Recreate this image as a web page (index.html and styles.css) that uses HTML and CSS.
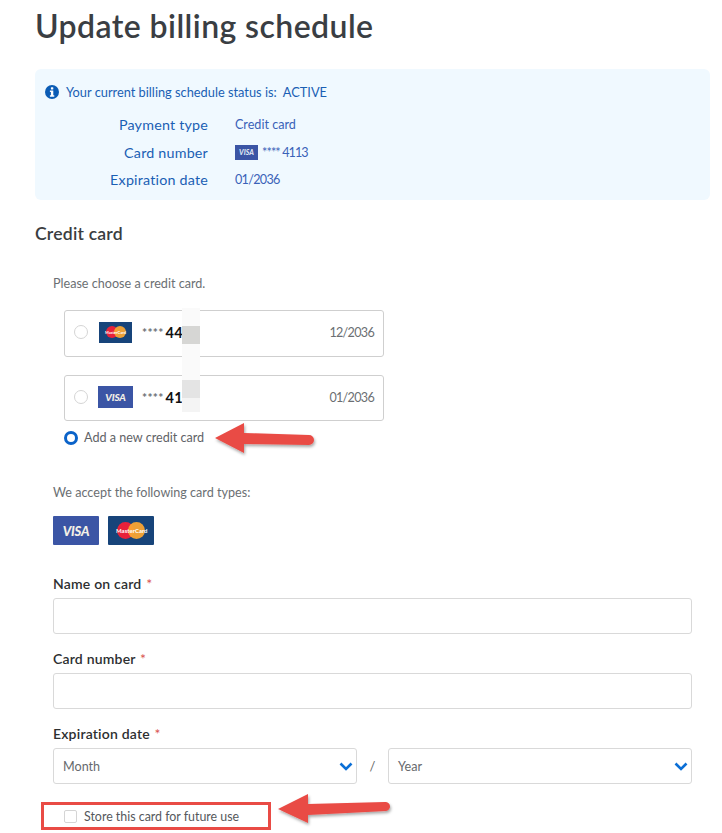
FILE: index.html
```html
<!DOCTYPE html>
<html lang="en">
<head>
<meta charset="utf-8">
<title>Update billing schedule</title>
<link rel="stylesheet" href="styles.css">
</head>
<body>
<main class="page">
  <h1 class="title">Update billing schedule</h1>
  <section class="status">
    <p class="status-line">
      <svg class="info" viewBox="0 0 14 14"><circle cx="7" cy="7" r="7" fill="#0b5cb5"/><rect x="5.9" y="2.2" width="2.4" height="2.3" rx=".6" fill="#fff"/><path d="M4.9 5.6h3.4v4.6h1v1.5H4.9v-1.5h1V7.1h-1z" fill="#fff"/></svg>
      <span>Your current billing schedule status is:&nbsp; ACTIVE</span>
    </p>
    <dl class="status-grid">
      <dt>Payment type</dt><dd>Credit card</dd>
      <dt>Card number</dt><dd class="num"><span class="mini-visa">VISA</span><span class="fig-tight">**** 4113</span></dd>
      <dt>Expiration date</dt><dd class="fig">01/2036</dd>
    </dl>
  </section>
  <h2 class="section-title">Credit card</h2>
  <div class="form">
    <p class="hint choose">Please choose a credit card.</p>
    <div class="saved">
      <div class="saved-card first">
        <span class="radio"></span>
        <span class="brand brand-mc small"><span class="mc-logo"><i class="red"></i><i class="org"></i><b>MasterCard</b></span></span>
        <span class="mask">****</span><span class="digits">44</span>
        <span class="exp fig">12/2036</span>
      </div>
      <div class="saved-card second">
        <span class="radio"></span>
        <span class="brand brand-visa mid">VISA</span>
        <span class="mask">****</span><span class="digits">41</span>
        <span class="exp fig">01/2036</span>
      </div>
      <div class="smudge"><i class="s1"></i><i class="s2"></i><i class="s3"></i><i class="s4"></i></div>
    </div>
    <label class="add-new"><span class="radio on"></span>Add a new credit card</label>
    <p class="hint accept">We accept the following card types:</p>
    <div class="brands">
      <span class="brand brand-visa big">VISA</span>
      <span class="brand brand-mc big"><span class="mc-logo lg"><i class="red"></i><i class="org"></i><b>MasterCard</b></span></span>
    </div>
    <div class="field name-field">
      <label class="label">Name on card <em>*</em></label>
      <input class="input" type="text">
    </div>
    <div class="field">
      <label class="label">Card number <em>*</em></label>
      <input class="input" type="text">
    </div>
    <div class="field">
      <label class="label">Expiration date <em>*</em></label>
      <div class="date-row">
        <div class="select"><span>Month</span><svg class="chev" viewBox="0 0 14 9"><path d="M1.500 1.500 7 7l5.500-5.500" fill="none" stroke="#0b6fd6" stroke-width="2.600"/></svg></div>
        <span class="slash">/</span>
        <div class="select"><span>Year</span><svg class="chev" viewBox="0 0 14 9"><path d="M1.500 1.500 7 7l5.500-5.500" fill="none" stroke="#0b6fd6" stroke-width="2.600"/></svg></div>
      </div>
    </div>
    <div class="store">
      <span class="check"></span><span>Store this card for future use</span>
    </div>
  </div>
</main>
<svg class="arrow arrow-a" viewBox="0 0 112 42"><defs><filter id="sh" x="-10%" y="-20%" width="130%" height="150%"><feDropShadow dx="1" dy="2" stdDeviation="1.500" flood-color="#000" flood-opacity=".35"/></filter></defs><path d="M5 20 34 5v10l65 2a5 5 0 0 1 0 10l-65-1v9z" fill="#e94b45" filter="url(#sh)"/></svg>
<svg class="arrow arrow-b" viewBox="0 0 122 42"><path d="M5 21 35 6v10l77-2a4.500 4.500 0 0 1 1 9l-78 4v8z" fill="#e94b45" filter="url(#sh)"/></svg>
</body>
</html>
```
FILE: styles.css
```css
* { box-sizing: border-box; }
html, body { margin: 0; padding: 0; background: #fff; }
body {
  font-family: "Lato", "Open Sans", sans-serif;
  color: #333;
  position: relative;
  height: 833px;
  overflow: hidden;
}
.page { padding: 0 12px 0 35px; }
.title {
  margin: 0;
  padding-top: 6px;
  font-size: 32px;
  line-height: 40px;
  font-weight: 600;
  letter-spacing: .42px;
  color: #3a3e43;
}
.status {
  margin-top: 23px;
  height: 131px;
  background: #f0f9ff;
  border-radius: 6px;
  padding: 14px 10px 0;
  color: #1a5fb4;
}
.status-line {
  margin: 0;
  display: flex;
  align-items: center;
  gap: 7px;
  font-size: 12.800px;
  line-height: 18px;
}
.info { width: 14px; height: 14px; flex: none; }
.status-grid {
  margin: 10px 0 0;
  display: grid;
  grid-template-columns: 163px 1fr;
  column-gap: 27px;
  grid-auto-rows: 27.500px;
  align-items: center;
}
.status-grid dt { text-align: right; font-size: 14.300px; letter-spacing: .2px; }
.status-grid dd { margin: 0; font-size: 12.600px; color: #3a62b8; }
.fig { letter-spacing: -.7px; }
.fig-tight { letter-spacing: -.9px; }
.num { display: flex; align-items: center; gap: 4px; }
.mini-visa {
  width: 23px; height: 15px;
  background: #3b55a5; color: #dfe4f2;
  font-size: 7px; font-weight: 900; font-style: italic;
  display: flex; align-items: center; justify-content: center;
}
.section-title {
  margin: 23px 0 0;
  font-size: 17.600px;
  line-height: 22px;
  font-weight: 600;
  letter-spacing: .2px;
  color: #3a3d40;
}
.form { padding: 0 18px 0 18px; }
.hint { margin: 0; font-size: 12.600px; line-height: 18px; color: #6b6f73; }
.choose { margin-top: 30px; }
.saved { position: relative; margin-top: 17px; margin-left: 11px; width: 320px; }
.saved-card {
  display: flex;
  align-items: center;
  border: 1px solid #cfcfcf;
  border-radius: 3px;
  background: #fff;
  padding: 0 9px;
  color: #6b6f73;
  font-size: 12.600px;
}
.first { height: 47px; padding-bottom: 3px; }
.second { height: 46px; margin-top: 18px; padding-bottom: 2px; }
.radio {
  width: 14px; height: 14px;
  border: 1px solid #d5d5d5;
  border-radius: 50%;
  background: #fff;
  flex: none;
}
.radio.on { border: 3.500px solid #0b63c9; }
.brand { display: flex; align-items: center; justify-content: center; flex: none; }
.brand-visa {
  background: #3b55a5; color: #f4f0e6;
  font-weight: 900; font-style: italic;
  letter-spacing: -.2px;
}
.brand-mc { background: #17447a; }
.small { width: 33px; height: 21px; margin-left: 11px; margin-right: 10px; }
.mid { width: 35px; height: 22px; font-size: 10px; margin-left: 10px; margin-right: 9px; }
.big { width: 46px; height: 29px; font-size: 13px; border-radius: 1px; }
.mc-logo { position: relative; width: 20px; height: 12px; display: block; }
.mc-logo i { position: absolute; top: 0; width: 12px; height: 12px; border-radius: 50%; }
.mc-logo .red { left: 0; background: #e8213a; }
.mc-logo .org { right: 0; background: #f9a533; opacity: .95; }
.mc-logo b {
  position: absolute; left: -1px; right: -1px; top: 3.500px;
  font-size: 4px; line-height: 5px; color: #fff; text-align: center; font-weight: 700;
  white-space: nowrap;
}
.mc-logo.lg { width: 28px; height: 17px; }
.mc-logo.lg i { width: 17px; height: 17px; }
.mc-logo.lg b { top: 5px; font-size: 6px; line-height: 7px; }
.mask { font-size: 12px; font-weight: 700; margin-right: 2px; letter-spacing: .3px; }
.digits { color: #111; font-weight: 700; font-size: 14.500px; letter-spacing: .3px; }
.exp { margin-left: auto; }
.smudge {
  position: absolute; left: 118px; top: -2px; width: 18px;
  display: flex; flex-direction: column;
}
.smudge i { display: block; width: 18px; }
.s1 { height: 18px; background: #fafafa; }
.s2 { height: 18px; background: #d6d6d4; }
.s3 { height: 36px; background: #fafafa; }
.s4 { height: 32px; background: linear-gradient(#e4e4e4 0 18px, #f4f4f4 18px); }
.add-new {
  display: flex; align-items: center; gap: 6px;
  margin-top: 8px; margin-left: 11px;
  font-size: 12.600px; line-height: 18px; color: #5f6367;
}
.accept { margin-top: 37px; }
.brands { display: flex; gap: 9px; margin-top: 14px; }
.field { margin-top: 15px; }
.name-field { margin-top: 29px; }
.label {
  display: block;
  font-size: 14px; line-height: 20px; font-weight: 600;
  letter-spacing: .2px; color: #2d2f31;
  margin-bottom: 4px;
}
.label em { font-style: normal; font-weight: 400; color: #d9534f; margin-left: 1px; }
.input {
  display: block; width: 100%; height: 36px;
  border: 1px solid #d9d9d9; border-radius: 3px; background: #fff;
}
.date-row { display: flex; align-items: center; }
.select {
  flex: 1;
  height: 36px;
  border: 1px solid #d9d9d9; border-radius: 3px;
  display: flex; align-items: center; justify-content: space-between;
  padding: 0 3px 0 9px;
  font-size: 12.600px; color: #66696d;
}
.slash { width: 31px; text-align: center; font-size: 13px; color: #666; }
.chev { width: 14px; height: 9px; }
.store {
  display: flex; align-items: center; gap: 7px;
  margin-top: 18px; margin-left: -12px;
  width: 230px; height: 28px;
  padding-left: 20px;
  border: 3px solid #e94b45;
  font-size: 12.400px; color: #55585c;
}
.check { width: 13px; height: 13px; border: 1px solid #d5d5d5; border-radius: 2px; }
.arrow { position: absolute; }
.arrow-a { left: 210px; top: 418px; width: 112px; height: 42px; }
.arrow-b { left: 273px; top: 788px; width: 122px; height: 42px; }
```
